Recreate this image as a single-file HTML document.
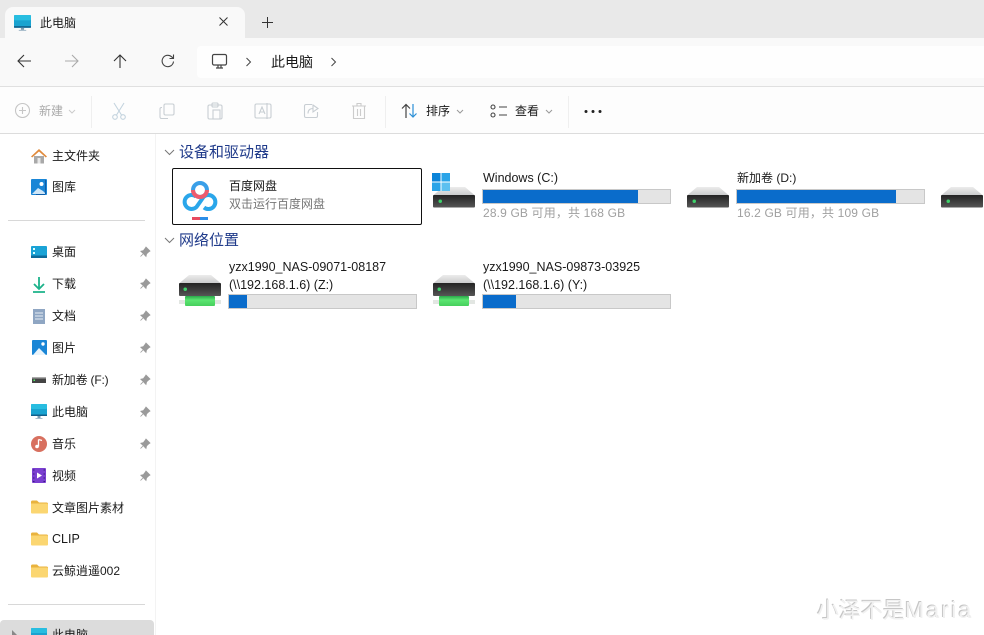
<!DOCTYPE html>
<html lang="zh"><head><meta charset="utf-8"><title>此电脑</title>
<style>
html,body{margin:0;padding:0;width:984px;height:635px;overflow:hidden;background:#fff}
body{position:relative;font-family:"Liberation Sans","Noto Sans CJK SC",sans-serif;font-size:12px;color:#1a1a1a}
.a,.t,svg{position:absolute}
.t{white-space:nowrap;line-height:16px}
.g{color:#777}
.d{color:#a0a0a0;letter-spacing:.15px}
.l{font-size:12.5px}
.h{font-size:15px;color:#1f3a8a;line-height:18px}
.bar{position:absolute;width:187px;height:13px;background:#e4e4e4;border:1px solid #c8c8c8}
.bar i{display:block;height:13px;background:#0a6ccb}
</style></head><body>
<svg width="0" height="0" style="position:absolute"><defs>
<linearGradient id="top" x1="0" y1="0" x2="0" y2="1"><stop offset="0" stop-color="#ececec"/><stop offset="1" stop-color="#c9cacb"/></linearGradient>
<linearGradient id="dark" x1="0" y1="0" x2="0" y2="1"><stop offset="0" stop-color="#232323"/><stop offset="1" stop-color="#565656"/></linearGradient>
<linearGradient id="grn" x1="0" y1="0" x2="0" y2="1"><stop offset="0" stop-color="#2aa84a"/><stop offset=".4" stop-color="#5ce672"/><stop offset="1" stop-color="#46cf5c"/></linearGradient>
<symbol id="pin" viewBox="0 0 12 12"><path d="M7 1l4 4-1 .6-2.400 2.200L7 10.400 1.800 5.200l2.600-.6L6.400 2z M3.800 8.200L1.500 10.500" fill="#9a9a9a" stroke="#9a9a9a" stroke-width=".8"/></symbol>
<symbol id="folder" viewBox="0 0 17 14"><path d="M0 2a1.500 1.500 0 0 1 1.500-1.500H6L8 2.500h7.500A1.500 1.500 0 0 1 17 4v2H0z" fill="#e9b33e"/><path d="M0 3.500h15.500A1.500 1.500 0 0 1 17 5v7.500a1 1 0 0 1-1 1H1a1 1 0 0 1-1-1z" fill="#fbd671"/></symbol>
<symbol id="mon" viewBox="0 0 16 16"><rect x="0" y="0" width="16" height="12" rx="1" fill="#1aa3d0"/><rect x="0" y="0" width="16" height="5" rx="1" fill="#28bde0"/><rect y="10.500" width="16" height="1.500" fill="#11608c"/><path d="M6.500 12h3v2h-3z" fill="#7b9bb0"/><path d="M4.500 14h7v1h-7z" fill="#a7bccb"/></symbol>
<symbol id="hdd" viewBox="0 0 42 21"><path d="M10 0h22l10 8.500H0z" fill="url(#top)"/><rect x="0" y="8" width="42" height="12.500" rx="1" fill="url(#dark)"/><rect x="5.500" y="12.500" width="3.500" height="3.500" rx="1.700" fill="#3ed16a"/></symbol>
<symbol id="nas" viewBox="0 0 42 32"><path d="M10 0h22l10 8.500H0z" fill="url(#top)"/><rect x="0" y="8" width="42" height="13" rx="1" fill="url(#dark)"/><rect x="4.500" y="12.500" width="3.500" height="3.500" rx="1.700" fill="#3ed16a"/><rect x="0" y="25" width="42" height="4" fill="#e2e6e2"/><rect x="6" y="21" width="30" height="10" rx="1" fill="url(#grn)"/></symbol>
</defs></svg>

<!-- title bar -->
<div class="a" style="left:0;top:0;width:984px;height:38px;background:#e9e9e9"></div>
<div class="a" style="left:5px;top:7px;width:240px;height:31px;background:#f9f9f9;border-radius:8px 8px 0 0"></div>
<svg style="left:14px;top:15px" width="17" height="17"><use href="#mon" width="17" height="17"/></svg>
<div class="t" style="left:40px;top:15px">此电脑</div>
<svg style="left:218px;top:16px" width="12" height="12" fill="none" stroke="#333" stroke-width="1"><path d="M1.500 1.500l8 8M9.500 1.500l-8 8"/></svg>
<svg style="left:262px;top:17px" width="12" height="12" fill="none" stroke="#333" stroke-width="1"><path d="M5.500 0v11M0 5.500h11"/></svg>

<!-- nav row -->
<div class="a" style="left:0;top:38px;width:984px;height:48px;background:#f9f9f9;border-bottom:1px solid #e0e0e0"></div>
<div class="a" style="left:197px;top:46px;width:787px;height:32px;background:#fefefe;border-radius:4px 0 0 4px"></div>
<svg style="left:16px;top:53px" width="16" height="16" fill="none" stroke="#333" stroke-width="1.100"><path d="M2 8h13M8 2L2 8l6 6"/></svg>
<svg style="left:64px;top:53px" width="16" height="16" fill="none" stroke="#aaa" stroke-width="1.100"><path d="M1 8h13M8 2l6 6-6 6"/></svg>
<svg style="left:112px;top:53px" width="16" height="16" fill="none" stroke="#333" stroke-width="1.100"><path d="M8 15V2M2 8l6-6 6 6"/></svg>
<svg style="left:160px;top:53px" width="16" height="16" fill="none" stroke="#444" stroke-width="1.100"><path d="M13.500 8.500a5.700 5.700 0 1 1-1.800-4.700L13.500 5.500M13.500 1.500v4h-4"/></svg>
<svg style="left:211px;top:53px" width="18" height="17" fill="none" stroke="#444" stroke-width="1.200"><rect x="1.500" y="1.500" width="14" height="10.500" rx="1.500"/><path d="M5 15h7M7 12v3M10 12v3"/></svg>
<svg style="left:245px;top:57px" width="8" height="10" fill="none" stroke="#444"><path d="M1.500 1l4 4-4 4"/></svg>
<div class="t" style="left:271px;top:54px;font-size:14px">此电脑</div>
<svg style="left:330px;top:57px" width="8" height="10" fill="none" stroke="#444"><path d="M1.500 1l4 4-4 4"/></svg>

<!-- toolbar -->
<div class="a" style="left:0;top:87px;width:984px;height:46px;background:#fdfdfd;border-bottom:1px solid #dcdcdc"></div>
<svg style="left:14px;top:102px" width="17" height="17" fill="none" stroke="#c6c6c6" stroke-width="1.100"><circle cx="8.500" cy="8.500" r="7"/><path d="M8.500 5v7M5 8.500h7"/></svg>
<div class="t" style="left:39px;top:103px;color:#aaa">新建</div>
<svg style="left:68px;top:109px" width="8" height="5" fill="none" stroke="#ccc"><path d="M1 1l3 3 3-3"/></svg>
<div class="a" style="left:91px;top:96px;width:1px;height:32px;background:#efefef"></div>
<svg style="left:111px;top:102px" width="16" height="18" fill="none" stroke="#c3d3de" stroke-width="1.100"><path d="M3 1l7.500 12M13 1L5.500 13"/><circle cx="4" cy="15" r="2.300"/><circle cx="12" cy="15" r="2.300"/></svg>
<svg style="left:159px;top:103px" width="17" height="17" fill="none" stroke="#c8ced3" stroke-width="1.100"><rect x="5" y="1" width="10" height="11" rx="1.500"/><path d="M3 4.500h-.5A1.500 1.500 0 0 0 1 6v8a1.500 1.500 0 0 0 1.500 1.500H9"/></svg>
<svg style="left:207px;top:102px" width="16" height="18" fill="none" stroke="#c8ced3" stroke-width="1.100"><rect x="1" y="3" width="14" height="14" rx="1.500"/><rect x="5" y="1" width="6" height="4" rx="1"/><rect x="6" y="8" width="7" height="9"/></svg>
<svg style="left:254px;top:102px" width="18" height="18" fill="none" stroke="#c8ced3" stroke-width="1.100"><rect x="1" y="2" width="16" height="14" rx="1.500"/><path d="M5 12l3-7 3 7M6 10h4M13 1v16"/></svg>
<svg style="left:303px;top:103px" width="16" height="16" fill="none" stroke="#c8ced3" stroke-width="1.100"><path d="M9 1.500h-6A1.500 1.500 0 0 0 1.500 3v10A1.500 1.500 0 0 0 3 14.500h10a1.500 1.500 0 0 0 1.500-1.500v-4M10 2l5 3.500-5 3.500zM10 5.500c-3 0-5 1.500-5 5"/></svg>
<svg style="left:351px;top:102px" width="16" height="18" fill="none" stroke="#cccccc" stroke-width="1.100"><path d="M1 4h14M6 4V1.500h4V4M2.500 4v12.500h11V4M6.500 7v7M9.500 7v7"/></svg>
<div class="a" style="left:385px;top:96px;width:1px;height:32px;background:#efefef"></div>
<svg style="left:401px;top:103px" width="18" height="16" fill="none" stroke-width="1.200"><path d="M5 15V2M1 5.500L5 1.500l4 4" stroke="#444"/><path d="M12 1v13M8.500 10.500l3.500 3.500 3.500-3.500" stroke="#2b8fd6"/></svg>
<div class="t" style="left:426px;top:103px">排序</div>
<svg style="left:456px;top:109px" width="8" height="5" fill="none" stroke="#999"><path d="M1 1l3 3 3-3"/></svg>
<svg style="left:490px;top:104px" width="18" height="14" fill="none" stroke="#444" stroke-width="1.100"><rect x="1" y="1" width="4" height="4" rx="2"/><rect x="1" y="9" width="4" height="4" rx="2"/><path d="M9 3h8M9 11h8"/></svg>
<div class="t" style="left:515px;top:103px">查看</div>
<svg style="left:545px;top:109px" width="8" height="5" fill="none" stroke="#999"><path d="M1 1l3 3 3-3"/></svg>
<div class="a" style="left:568px;top:96px;width:1px;height:32px;background:#efefef"></div>
<svg style="left:584px;top:109px" width="18" height="5" fill="#222"><circle cx="2" cy="2.500" r="1.500"/><circle cx="9" cy="2.500" r="1.500"/><circle cx="16" cy="2.500" r="1.500"/></svg>

<!-- sidebar -->
<div class="a" style="left:155px;top:134px;width:1px;height:501px;background:#f3f3f3"></div>
<svg style="left:31px;top:148px" width="16" height="16"><path d="M3 8h10v7.500H3z" fill="#a9a9a9"/><path d="M6.500 10h3v5.500h-3z" fill="#e8e8e8"/><path d="M8 1L0 8.500l1.200 1L8 3.500l6.800 6 1.200-1z" fill="#e08a3c"/></svg>
<div class="t" style="left:52px;top:148px">主文件夹</div>
<svg style="left:31px;top:179px" width="16" height="17"><rect width="16" height="16" rx="1" fill="#1a86d6"/><circle cx="10.500" cy="5" r="2" fill="#fff"/><path d="M1 15l6-6 5 3 3 3z" fill="#cfe6f7"/><path d="M14 1v15H5v-1h10V1z" fill="#0f5da8"/></svg>
<div class="t" style="left:52px;top:179px">图库</div>
<div class="a" style="left:8px;top:220px;width:137px;height:1px;background:#d8d8d8"></div>

<svg style="left:31px;top:246px" width="16" height="12"><rect width="16" height="12" rx="1" fill="#1aa3d6"/><rect y="9.500" width="16" height="2.500" fill="#0d6a99"/><rect x="2" y="2" width="2" height="2" fill="#dff"/><rect x="2" y="6" width="2" height="2" fill="#dff"/></svg>
<div class="t" style="left:52px;top:244px">桌面</div>
<svg style="left:32px;top:277px" width="14" height="16" fill="none" stroke="#1cb28a" stroke-width="1.800"><path d="M7 0v11M2 7l5 5 5-5M1 15h12"/></svg>
<div class="t" style="left:52px;top:276px">下载</div>
<svg style="left:33px;top:309px" width="12" height="15"><rect width="12" height="15" fill="#8fa6c3"/><path d="M2 4h8M2 7h8M2 10h8" stroke="#e7edf4"/></svg>
<div class="t" style="left:52px;top:308px">文档</div>
<svg style="left:32px;top:340px" width="15" height="15"><rect width="15" height="15" rx="1" fill="#1a86d6"/><circle cx="11" cy="4" r="1.700" fill="#fff"/><path d="M1 15l6-7 7 7z" fill="#eaf4fb"/></svg>
<div class="t" style="left:52px;top:340px">图片</div>
<svg style="left:32px;top:377px" width="14" height="6"><rect width="14" height="6" fill="#444"/><rect y="0" width="14" height="1.500" fill="#aaa"/><rect x="1.500" y="2.500" width="1.500" height="1.500" fill="#5e6"/></svg>
<div class="t" style="left:52px;top:372px;letter-spacing:-.2px">新加卷 (F:)</div>
<svg style="left:31px;top:404px" width="16" height="16"><use href="#mon" width="16" height="16"/></svg>
<div class="t" style="left:52px;top:404px">此电脑</div>
<svg style="left:31px;top:436px" width="16" height="16"><circle cx="8" cy="8" r="8" fill="#d8705f"/><path d="M7.500 3.500v7M7.500 3.500l3.500 1" stroke="#fff" stroke-width="1.300" fill="none"/><circle cx="6" cy="10.500" r="1.800" fill="#fff"/></svg>
<div class="t" style="left:52px;top:436px">音乐</div>
<svg style="left:32px;top:468px" width="14" height="15"><rect width="14" height="15" rx="1" fill="#7a3fd0"/><path d="M5 4.500l5 3-5 3z" fill="#fff"/><path d="M1 2h1.500M1 6h1.500M1 10h1.500M1 13.500h1.500M11.500 2H13M11.500 6H13M11.500 10H13M11.500 13.500H13" stroke="#3b1a80"/></svg>
<div class="t" style="left:52px;top:468px">视频</div>
<svg style="left:31px;top:500px" width="17" height="14"><use href="#folder" width="17" height="14"/></svg>
<div class="t" style="left:52px;top:500px">文章图片素材</div>
<svg style="left:31px;top:532px" width="17" height="14"><use href="#folder" width="17" height="14"/></svg>
<div class="t l" style="left:52px;top:531px">CLIP</div>
<svg style="left:31px;top:564px" width="17" height="14"><use href="#folder" width="17" height="14"/></svg>
<div class="t" style="left:52px;top:563px">云鲸逍遥002</div>
<div class="a" style="left:8px;top:604px;width:137px;height:1px;background:#d8d8d8"></div>
<svg style="left:139px;top:246px" width="12" height="12"><use href="#pin" width="12" height="12"/></svg>
<svg style="left:139px;top:278px" width="12" height="12"><use href="#pin" width="12" height="12"/></svg>
<svg style="left:139px;top:310px" width="12" height="12"><use href="#pin" width="12" height="12"/></svg>
<svg style="left:139px;top:342px" width="12" height="12"><use href="#pin" width="12" height="12"/></svg>
<svg style="left:139px;top:374px" width="12" height="12"><use href="#pin" width="12" height="12"/></svg>
<svg style="left:139px;top:406px" width="12" height="12"><use href="#pin" width="12" height="12"/></svg>
<svg style="left:139px;top:438px" width="12" height="12"><use href="#pin" width="12" height="12"/></svg>
<svg style="left:139px;top:470px" width="12" height="12"><use href="#pin" width="12" height="12"/></svg>
<div class="a" style="left:0;top:620px;width:154px;height:15px;background:#dcdcdc;border-radius:4px 4px 0 0"></div>
<svg style="left:12px;top:630px" width="6" height="5" fill="#888"><path d="M0 0l5 5H0z"/></svg>
<svg style="left:31px;top:628px" width="16" height="16"><use href="#mon" width="16" height="16"/></svg>
<div class="t" style="left:52px;top:627px">此电脑</div>

<!-- content -->
<svg style="left:164px;top:149px" width="11" height="7" fill="none" stroke="#777"><path d="M1 1l4.500 4.500L10 1"/></svg>
<div class="t h" style="left:179px;top:144px">设备和驱动器</div>
<div class="a" style="left:172px;top:168px;width:248px;height:55px;border:1px solid #111;border-radius:2px"></div>
<svg style="left:181px;top:179px" width="39" height="42" fill="none">
<path d="M15 17.500A7 7 0 1 0 15.500 28L22.500 18A7 7 0 1 1 23 28.500" stroke="#2aa6ea" stroke-width="4"/>
<circle cx="19" cy="11" r="7" stroke="#3a9fe8" stroke-width="4"/>
<path d="M12 11a7 7 0 0 0 14 0" stroke="#ee5a6e" stroke-width="4"/>
<rect x="11" y="38" width="8" height="3" fill="#e84a5f"/><rect x="19" y="38" width="8" height="3" fill="#2c8ee8"/>
</svg>
<div class="t" style="left:229px;top:178px">百度网盘</div>
<div class="t g" style="left:229px;top:196px">双击运行百度网盘</div>

<svg style="left:433px;top:187px" width="42" height="21"><use href="#hdd" width="42" height="21"/></svg>
<svg style="left:432px;top:173px" width="18" height="18"><rect width="18" height="18" fill="#fff"/><path d="M0 0h8.500v8.500H0z" fill="#0b84d8"/><path d="M9.500 0H18v8.500H9.500z" fill="#2aa4e8"/><path d="M0 9.500h8.500V18H0z" fill="#2aa4e8"/><path d="M9.500 9.500H18V18H9.500z" fill="#5cc0f0"/></svg>
<div class="t l" style="left:483px;top:170px">Windows (C:)</div>
<div class="bar" style="left:482px;top:189px"><i style="width:155px"></i></div>
<div class="t d" style="left:483px;top:205px">28.9 GB 可用，共 168 GB</div>

<svg style="left:687px;top:187px" width="42" height="21"><use href="#hdd" width="42" height="21"/></svg>
<div class="t" style="left:737px;top:170px">新加卷 (D:)</div>
<div class="bar" style="left:736px;top:189px"><i style="width:159px"></i></div>
<div class="t d" style="left:737px;top:205px">16.2 GB 可用，共 109 GB</div>
<svg style="left:941px;top:187px" width="42" height="21"><use href="#hdd" width="42" height="21"/></svg>

<svg style="left:164px;top:237px" width="11" height="7" fill="none" stroke="#777"><path d="M1 1l4.500 4.500L10 1"/></svg>
<div class="t h" style="left:179px;top:232px">网络位置</div>
<svg style="left:179px;top:275px" width="42" height="32"><use href="#nas" width="42" height="32"/></svg>
<div class="t l" style="left:229px;top:259px">yzx1990_NAS-09071-08187</div>
<div class="t l" style="left:229px;top:277px">(\\192.168.1.6) (Z:)</div>
<div class="bar" style="left:228px;top:294px"><i style="width:18px"></i></div>
<svg style="left:433px;top:275px" width="42" height="32"><use href="#nas" width="42" height="32"/></svg>
<div class="t l" style="left:483px;top:259px">yzx1990_NAS-09873-03925</div>
<div class="t l" style="left:483px;top:277px">(\\192.168.1.6) (Y:)</div>
<div class="bar" style="left:482px;top:294px"><i style="width:33px"></i></div>

<div class="t" style="left:817px;top:597px;font-size:22px;line-height:26px;color:#f1f1f1;text-shadow:-1px -1px 0 #c6c6c6">小泽不是<span style="font-size:23px;letter-spacing:2.200px">Maria</span></div>
</body></html>
